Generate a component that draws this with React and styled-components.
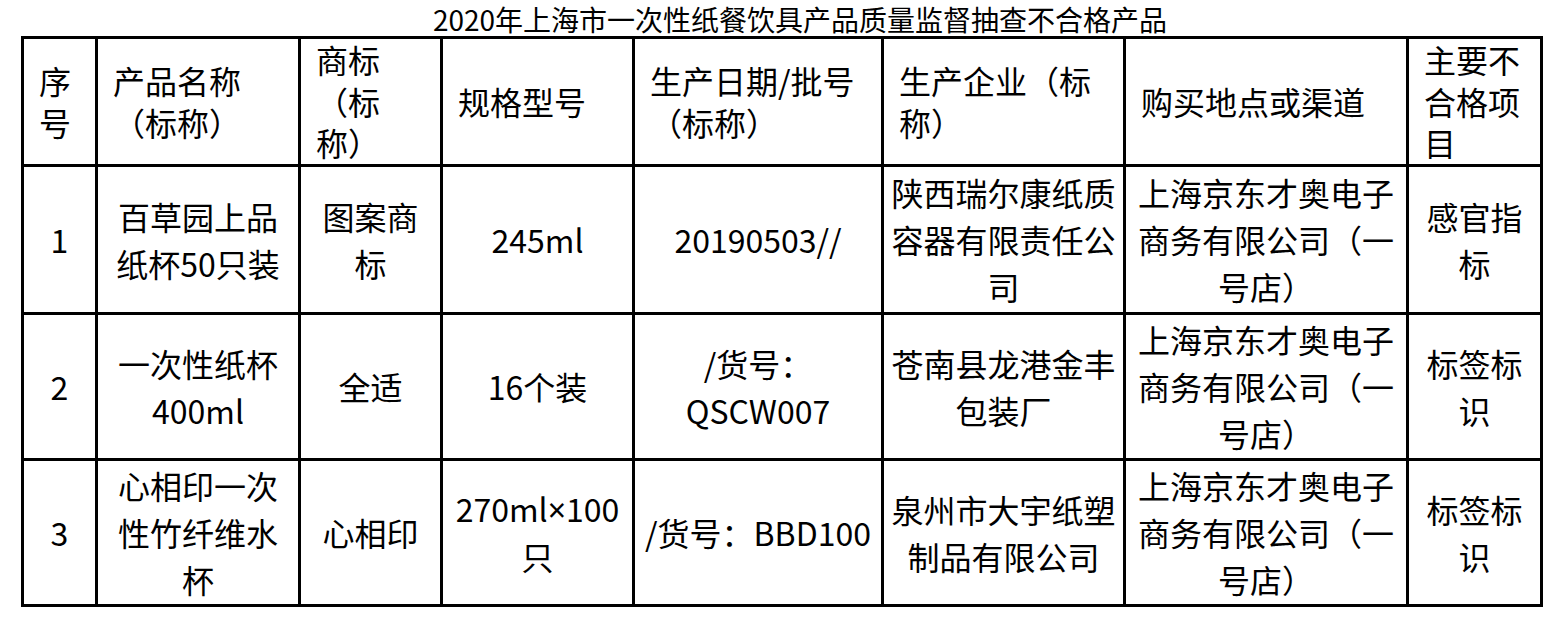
import styled, { createGlobalStyle } from "styled-components";

const GlobalStyle = createGlobalStyle`
  body {
    margin: 0;
    background: #fff;
    color: #000;
    font-family: "Noto Sans CJK SC", "Noto Sans", sans-serif;
    text-spacing-trim: space-all;
  }
`;

const headers = [
  "序号",
  "产品名称（标称）",
  "商标（标称）",
  "规格型号",
  "生产日期/批号（标称）",
  "生产企业（标称）",
  "购买地点或渠道",
  "主要不合格项目",
];

const rows = [
  [
    "1",
    "百草园上品纸杯50只装",
    "图案商标",
    "245ml",
    "20190503//",
    "陕西瑞尔康纸质容器有限责任公司",
    "上海京东才奥电子商务有限公司（一号店）",
    "感官指标",
  ],
  [
    "2",
    "一次性纸杯400ml",
    "全适",
    "16个装",
    "/货号：QSCW007",
    "苍南县龙港金丰包装厂",
    "上海京东才奥电子商务有限公司（一号店）",
    "标签标识",
  ],
  [
    "3",
    "心相印一次性竹纤维水杯",
    "心相印",
    <>
      270ml<Times>×</Times>100只
    </>,
    "/货号：BBD100",
    "泉州市大宇纸塑制品有限公司",
    "上海京东才奥电子商务有限公司（一号店）",
    "标签标识",
  ],
];

export default function App() {
  return (
    <>
      <GlobalStyle />
      <Page>
        <Title>2020年上海市一次性纸餐饮具产品质量监督抽查不合格产品</Title>
        <Table>
          {headers.map((h) => (
            <HeadCell key={h}>
              <span>{h}</span>
            </HeadCell>
          ))}
          {rows.map((row, i) =>
            row.map((text, j) => (
              <Cell key={i + "-" + j}>
                <span>{text}</span>
              </Cell>
            ))
          )}
        </Table>
      </Page>
    </>
  );
}

function Times({ children }) {
  return <Symbol>{children}</Symbol>;
}

const Symbol = styled.span`
  font-family: "Noto Sans", "DejaVu Sans", sans-serif;
`;

const Page = styled.div`
  padding-left: 21px;
  width: 1522px;
`;

const Title = styled.div`
  height: 36px;
  line-height: 36px;
  font-size: 28px;
  text-align: center;
  padding-left: 36px;
  padding-top: 1px;
  box-sizing: border-box;
  white-space: nowrap;
`;

const Table = styled.div`
  display: grid;
  grid-template-columns: 71px 200px 139px 189px 246px 239px 280px 131px;
  grid-template-rows: 125px 145px 143px 143px;
  gap: 3px;
  padding: 3px;
  background: #000;
  width: fit-content;
`;

const HeadCell = styled.div`
  background: #fff;
  display: flex;
  align-items: center;
  padding: 0 6px 0 15px;
  font-size: 32px;
  line-height: 41.5px;
  text-align: left;
  min-width: 0;
`;

const Cell = styled.div`
  background: #fff;
  display: flex;
  align-items: center;
  justify-content: center;
  padding: 0 6px;
  font-size: 32px;
  line-height: 47px;
  text-align: center;
  min-width: 0;
`;
